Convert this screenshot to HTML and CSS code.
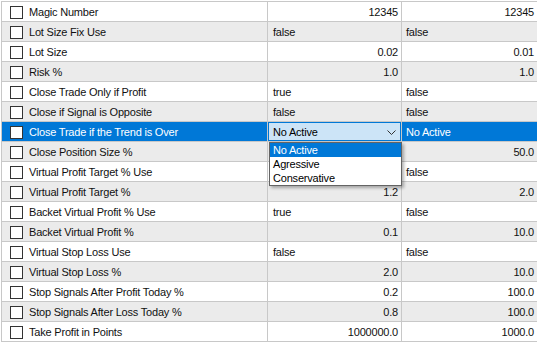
FILE: index.html
```html
<!DOCTYPE html>
<html lang="en">
<head>
  <meta charset="UTF-8">
  <title>Inputs</title>
  <link rel="stylesheet" href="styles.css">
</head>
<body>
  <div class="grid">
    <div class="row">
      <div class="name"><span class="chk"></span>Magic Number</div>
      <div class="num">12345</div>
      <div class="num">12345</div>
    </div>
    <div class="row alt">
      <div class="name"><span class="chk"></span>Lot Size Fix Use</div>
      <div class="txt">false</div>
      <div class="txt">false</div>
    </div>
    <div class="row">
      <div class="name"><span class="chk"></span>Lot Size</div>
      <div class="num">0.02</div>
      <div class="num">0.01</div>
    </div>
    <div class="row alt">
      <div class="name"><span class="chk"></span>Risk %</div>
      <div class="num">1.0</div>
      <div class="num">1.0</div>
    </div>
    <div class="row">
      <div class="name"><span class="chk"></span>Close Trade Only if Profit</div>
      <div class="txt">true</div>
      <div class="txt">false</div>
    </div>
    <div class="row alt">
      <div class="name"><span class="chk"></span>Close if Signal is Opposite</div>
      <div class="txt">false</div>
      <div class="txt">false</div>
    </div>
    <div class="row sel">
      <div class="name"><span class="chk"></span>Close Trade if the Trend is Over</div>
      <div class="combo-cell">
        <div class="combo">
          <span>No Active</span>
          <svg class="arrow" width="9" height="5" viewBox="0 0 9 5"><polyline points="0.5,0.5 4.5,4.5 8.5,0.5" fill="none" stroke="#333" stroke-width="1"/></svg>
        </div>
        <ul class="drop">
          <li class="on">No Active</li>
          <li>Agressive</li>
          <li>Conservative</li>
        </ul>
      </div>
      <div class="txt">No Active</div>
    </div>
    <div class="row alt">
      <div class="name"><span class="chk"></span>Close Position Size %</div>
      <div class="num"></div>
      <div class="num">50.0</div>
    </div>
    <div class="row">
      <div class="name"><span class="chk"></span>Virtual Profit Target % Use</div>
      <div class="txt"></div>
      <div class="txt">false</div>
    </div>
    <div class="row alt">
      <div class="name"><span class="chk"></span>Virtual Profit Target %</div>
      <div class="num">1.2</div>
      <div class="num">2.0</div>
    </div>
    <div class="row">
      <div class="name"><span class="chk"></span>Backet Virtual Profit % Use</div>
      <div class="txt">true</div>
      <div class="txt">false</div>
    </div>
    <div class="row alt">
      <div class="name"><span class="chk"></span>Backet Virtual Profit %</div>
      <div class="num">0.1</div>
      <div class="num">10.0</div>
    </div>
    <div class="row">
      <div class="name"><span class="chk"></span>Virtual Stop Loss Use</div>
      <div class="txt">false</div>
      <div class="txt">false</div>
    </div>
    <div class="row alt">
      <div class="name"><span class="chk"></span>Virtual Stop Loss %</div>
      <div class="num">2.0</div>
      <div class="num">10.0</div>
    </div>
    <div class="row">
      <div class="name"><span class="chk"></span>Stop Signals After Profit Today %</div>
      <div class="num">0.2</div>
      <div class="num">100.0</div>
    </div>
    <div class="row alt">
      <div class="name"><span class="chk"></span>Stop Signals After Loss Today %</div>
      <div class="num">0.8</div>
      <div class="num">100.0</div>
    </div>
    <div class="row">
      <div class="name"><span class="chk"></span>Take Profit in Points</div>
      <div class="num">1000000.0</div>
      <div class="num">1000.0</div>
    </div>
  </div>
</body>
</html>
```

FILE: styles.css
```css
*{
  margin:0;
  padding:0;
  box-sizing: border-box;
}
li{
  list-style: none;
}
body{
  background-color: #fff;
  font-family: "Liberation Sans", Arial, sans-serif;
  font-size: 11px;
  letter-spacing: -0.2px;
  color: #111;
}
.grid{
  display: grid;
  grid-template-columns: 265px 133px 135px;
  grid-auto-rows: 19px;
  gap: 1px;
  width: 536px;
  margin: 1px 0 0 1px;
  border: 1px solid #c8c8c8;
  background-color: #c8c8c8;
}
.row{
  display: contents;
}
.row > div{
  display: flex;
  align-items: center;
  background-color: #fff;
  white-space: nowrap;
}
.row.alt > div{
  background-color: #ebebeb;
}
.row.sel > div{
  background-color: #0078d7;
  color: #fff;
}
.name{
  padding-left: 8px;
}
.chk{
  width: 13px;
  height: 13px;
  margin-right: 6px;
  margin-top: 1px;
  border: 1px solid #333;
  background-color: #fff;
  flex: none;
}
.txt{
  padding-left: 5px;
}
.row > .txt:last-child{
  padding-left: 4px;
}
.num{
  justify-content: flex-end;
  padding-right: 3px;
}
.row.sel > .combo-cell{
  position: relative;
  overflow: visible;
  background-color: #cce4f7;
}
.combo{
  display: flex;
  align-items: center;
  justify-content: space-between;
  width: 100%;
  height: 100%;
  padding: 0 4px 0 4px;
  border: 1px solid #0078d7;
  background-color: #cce4f7;
  color: #000;
}
.arrow{
  margin-top: 1px;
}
.drop{
  position: absolute;
  top: 20px;
  left: 1px;
  width: 133px;
  padding: 0;
  border: 1px solid #646464;
  background-color: #fff;
  color: #000;
  box-shadow: 2px 2px 3px rgba(0,0,0,0.3);
  z-index: 2;
}
.drop li{
  height: 14px;
  line-height: 14px;
  padding-left: 3px;
}
.drop .on{
  background-color: #0078d7;
  color: #fff;
}
```
